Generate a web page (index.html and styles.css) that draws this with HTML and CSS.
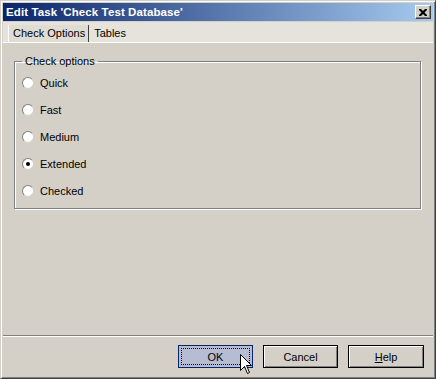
FILE: index.html
```html
<!DOCTYPE html>
<html>
<head>
<meta charset="utf-8">
<link rel="stylesheet" href="styles.css">
</head>
<body>
<div class="window">
  <div class="titlebar">
    <span class="title">Edit Task 'Check Test Database'</span>
    <span class="close"><svg width="8" height="7" viewBox="0 0 8 7"><path d="M0 0h2l2 2 2-2h2v1l-2.5 2.5L8 6v1H6L4 5 2 7H0V6l2.5-2.5L0 1z" fill="#000"/></svg></span>
  </div>
  <div class="tabs">
    <div class="tab active">Check Options</div>
    <div class="tab">Tables</div>
  </div>
  <div class="content">
    <fieldset class="group">
      <legend>Check options</legend>
      <div class="radio"><span class="circle"></span>Quick</div>
      <div class="radio"><span class="circle"></span>Fast</div>
      <div class="radio"><span class="circle"></span>Medium</div>
      <div class="radio"><span class="circle checked"></span>Extended</div>
      <div class="radio"><span class="circle"></span>Checked</div>
    </fieldset>
  </div>
  <div class="footer">
    <div class="btn default"><span class="focus">OK</span>
      <svg class="cursor" width="13" height="21" viewBox="0 0 13 21"><path d="M0.5 0.5V16.5L4.5 12.5L7.5 19.5L9.5 18.5L6.5 11.5H11.5Z" fill="#fff" stroke="#000" stroke-width="1"/></svg>
    </div>
    <div class="btn">Cancel</div>
    <div class="btn help"><u>H</u>elp</div>
  </div>
</div>
</body>
</html>
```
FILE: styles.css
```css
html, body {
  margin: 0;
  padding: 0;
  background: #d4d0c8;
}
body {
  font-family: "Liberation Sans", Arial, sans-serif;
  font-size: 11px;
  color: #000;
}
.window {
  width: 436px;
  height: 379px;
  box-sizing: border-box;
  border: 1px solid;
  border-color: #d4d0c8 #404040 #404040 #d4d0c8;
  box-shadow: inset 1px 1px 0 #fff, inset -1px -1px 0 #808080;
  padding: 2px;
  display: flex;
  flex-direction: column;
  background: #d4d0c8;
}
.titlebar {
  height: 18px;
  flex: none;
  background: linear-gradient(to right, #0a246a, #a6caf0);
  display: flex;
  align-items: center;
  justify-content: space-between;
  padding: 0 2px 0 3px;
}
.title {
  color: #fff;
  font-weight: bold;
  font-size: 11.5px;
  letter-spacing: 0.1px;
}
.close {
  width: 16px;
  height: 14px;
  box-sizing: border-box;
  background: #d4d0c8;
  border: 1px solid;
  border-color: #fff #404040 #404040 #fff;
  box-shadow: inset -1px -1px 0 #808080;
  display: flex;
  align-items: center;
  justify-content: center;
  padding-right: 1px;
}
.tabs {
  margin-top: 1px;
  height: 21px;
  box-sizing: border-box;
  flex: none;
  background: #e6e3dc;
  border-bottom: 1px solid #fff;
  display: flex;
  align-items: flex-end;
  padding-left: 5px;
}
.tab {
  height: 17px;
  line-height: 17px;
  padding: 0 4px 0 5px;
  box-sizing: border-box;
}
.tab.active {
  border-left: 1px solid #fff;
  border-right: 1px solid #404040;
  background: #dfdcd4;
  padding: 0 3px 0 4px;
}
.content {
  flex: 1;
  padding: 11px 12px 0 11px;
}
.group {
  margin: 0;
  height: 155px;
  box-sizing: border-box;
  border: 1px solid #808080;
  box-shadow: 1px 1px 0 #fff, inset 1px 1px 0 #fff;
  padding: 1px 0 0 7px;
}
.group legend {
  padding: 0 3px;
  margin-left: 0;
  line-height: 14px;
}
.radio {
  height: 27px;
  display: flex;
  align-items: center;
  gap: 6px;
}
.circle {
  width: 12px;
  height: 12px;
  box-sizing: border-box;
  border-radius: 50%;
  background: #fff;
  border: 1px solid;
  border-color: #808080 #d4d0c8 #d4d0c8 #808080;
  display: flex;
  align-items: center;
  justify-content: center;
}
.circle.checked::after {
  content: "";
  width: 4px;
  height: 4px;
  border-radius: 50%;
  background: #000;
}
.footer {
  flex: none;
  border-top: 1px solid #808080;
  box-shadow: inset 0 1px 0 #fff;
  padding: 9px 9px 8px 0;
  display: flex;
  justify-content: flex-end;
  gap: 10px;
}
.btn {
  width: 75px;
  height: 23px;
  box-sizing: border-box;
  border: 1px solid #000;
  box-shadow: inset 1px 1px 0 #fff, inset -1px -1px 0 #808080;
  display: flex;
  align-items: center;
  justify-content: center;
  position: relative;
}
.btn.help {
  width: 76px;
}
.btn.default {
  border-color: #0a246a;
  background: #b6bdd2;
  box-shadow: none;
  padding: 2px;
}
.focus {
  flex: 1;
  align-self: stretch;
  border: 1px dotted #000;
  display: flex;
  align-items: center;
  justify-content: center;
}
.cursor {
  position: absolute;
  left: 61px;
  top: 8px;
}
```
